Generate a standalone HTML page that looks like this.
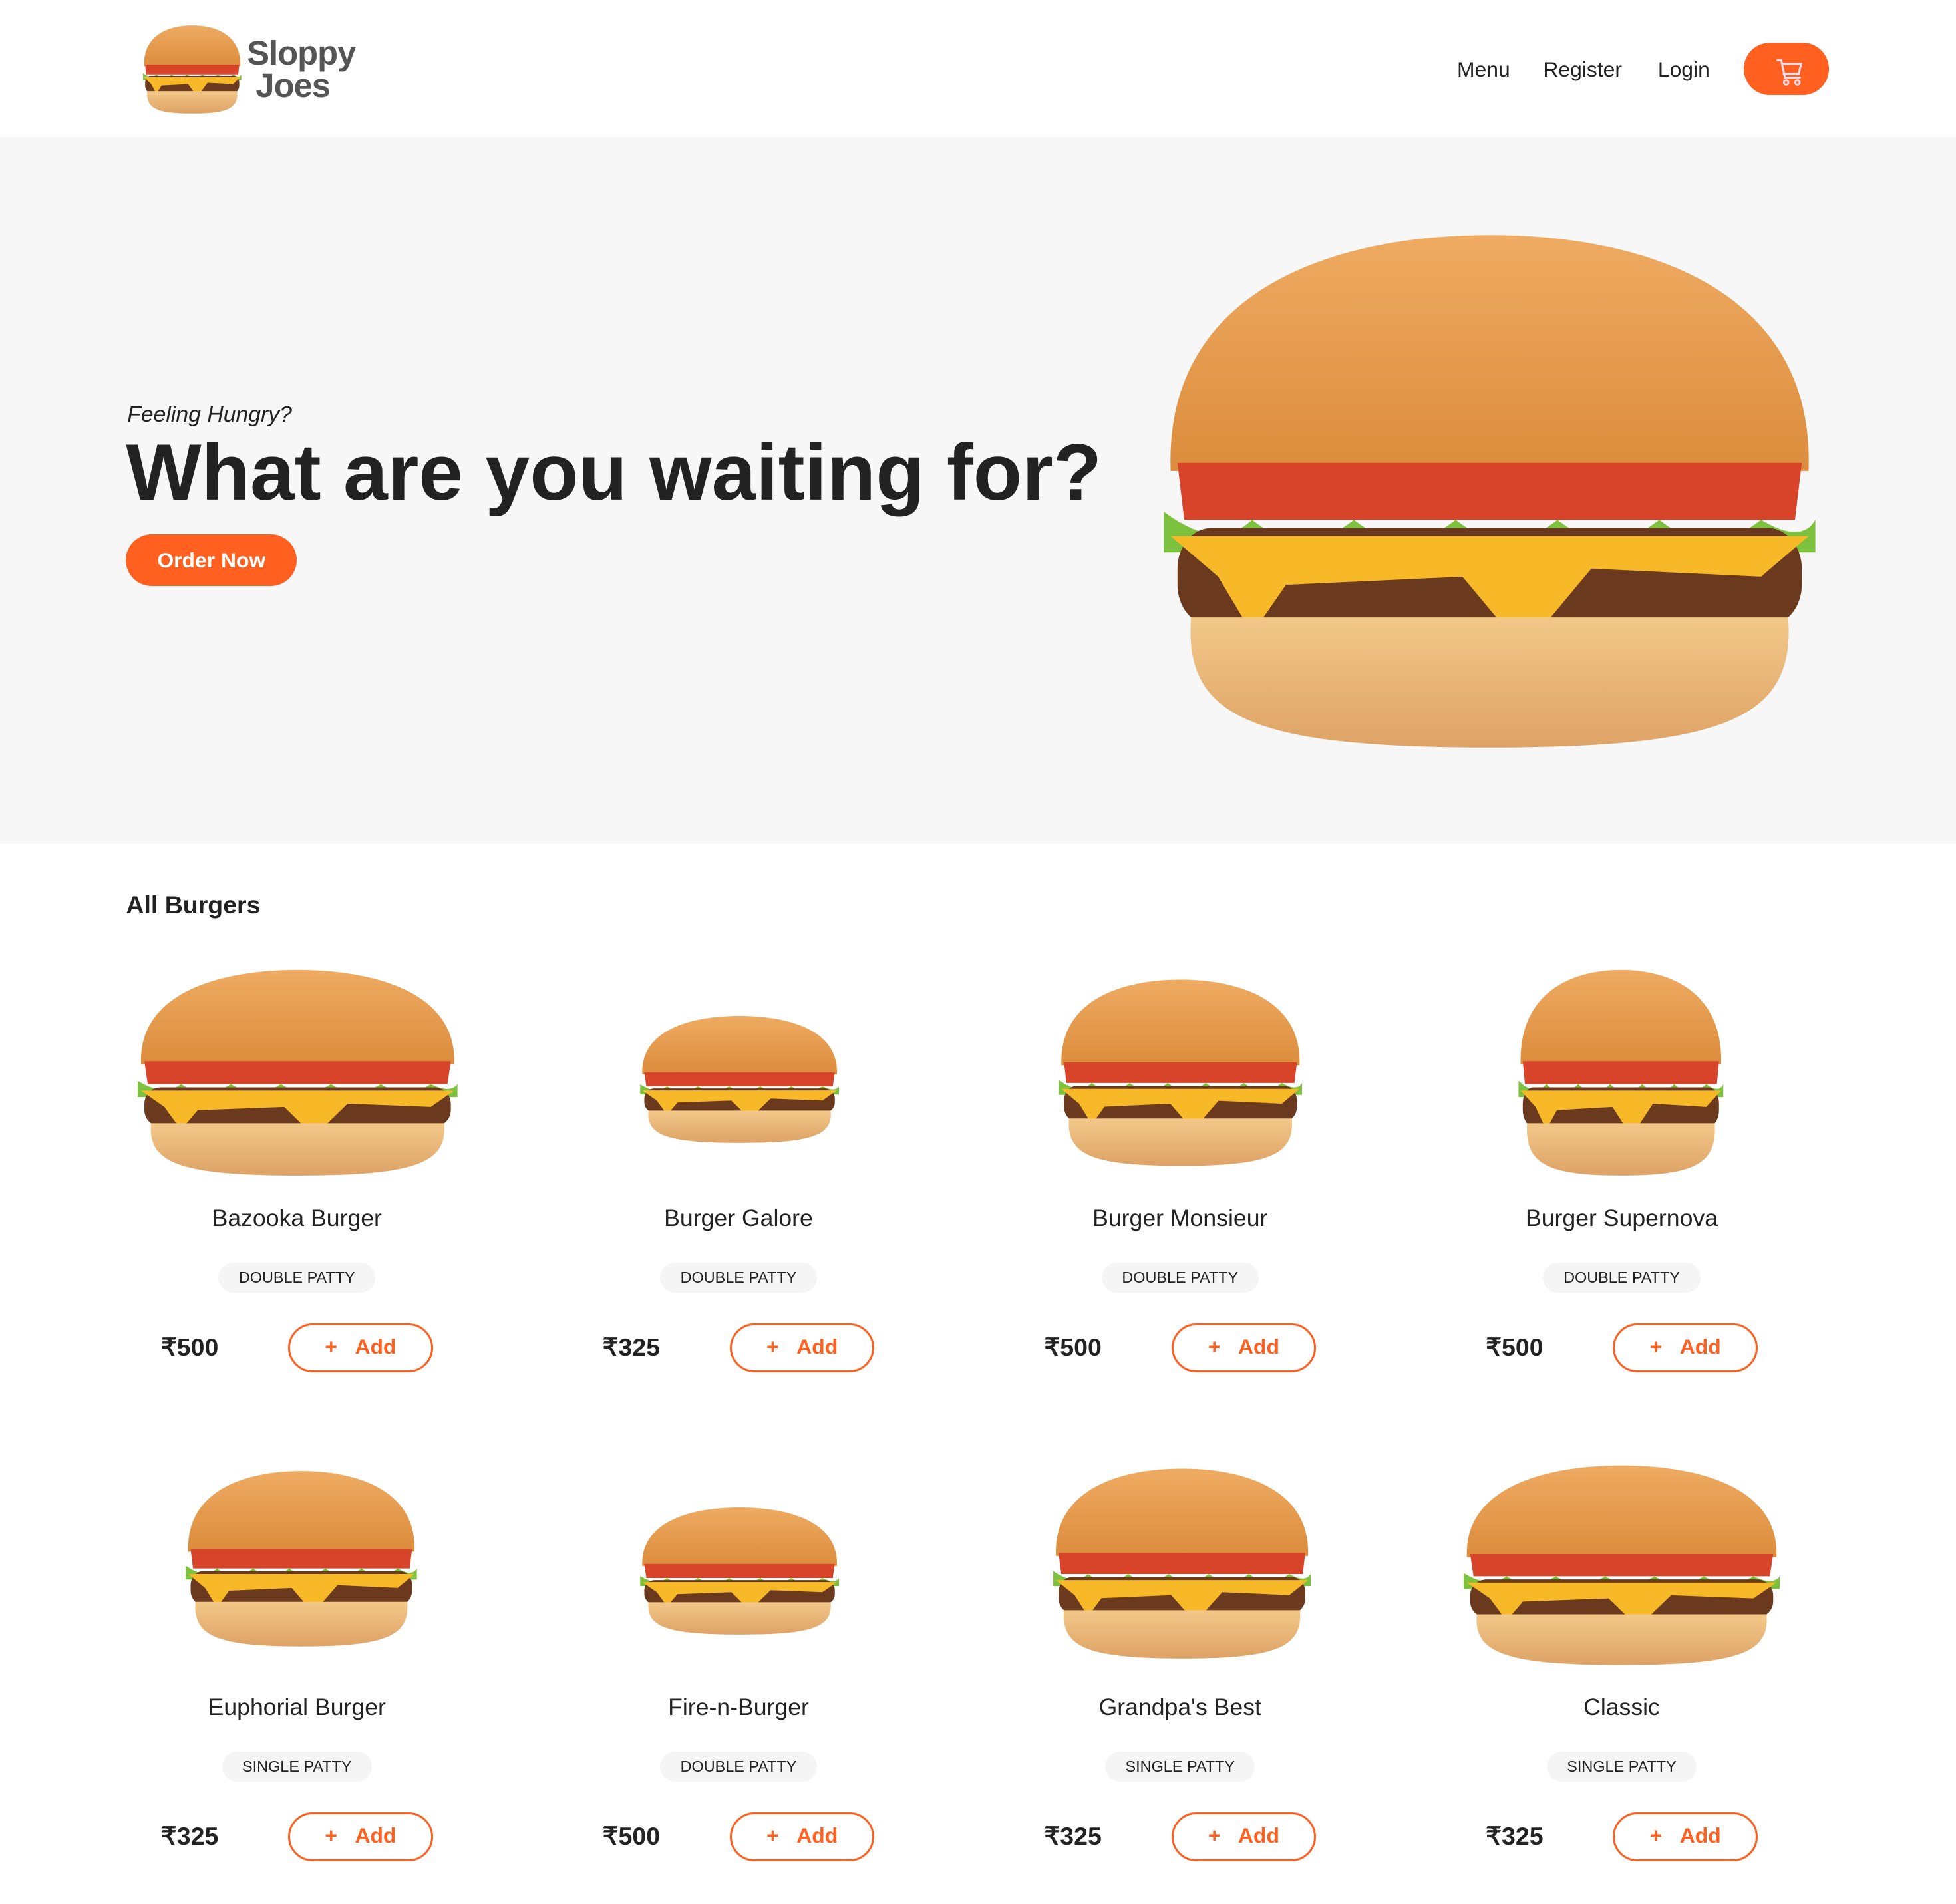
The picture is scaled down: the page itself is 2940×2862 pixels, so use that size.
<!DOCTYPE html>
<html><head><meta charset="utf-8">
<style>
html{zoom:1.875}
*{margin:0;padding:0;box-sizing:border-box}
body{width:1568px;height:1526px;overflow:hidden;background:#fff;font-family:"Liberation Sans",sans-serif;color:#222;position:relative}
.abs{position:absolute}
header{position:absolute;left:0;top:0;width:1568px;height:110px;background:#fff}
.nav{position:absolute;top:46px;font-size:17px;color:#222}
.cart{position:absolute;left:1398px;top:34px;width:68px;height:42px;border-radius:21px;background:#ff5f1f}
.hero{position:absolute;left:0;top:110px;width:1568px;height:566px;background:#f7f7f7}
h1{position:absolute;left:101px;font-size:64px;font-weight:bold;letter-spacing:0;white-space:nowrap;color:#222}
.btn{position:absolute;left:101px;width:137px;height:42px;border-radius:21px;background:#ff5f1f;color:#fff;font-weight:bold;font-size:17px;text-align:center;line-height:42px}
.name{position:absolute;width:300px;text-align:center;font-size:19px;color:#222}
.tag{position:absolute;height:24px;border-radius:12px;background:#f5f5f5;font-size:12.5px;line-height:24px;text-align:center;color:#222}
.price{position:absolute;font-size:20px;font-weight:bold;color:#222}
.add{position:absolute;width:116px;height:39px;border:2px solid #ff5f1f;border-radius:20px;color:#ff5f1f;font-weight:bold;font-size:17px;line-height:35px;text-align:center}
svg.b{position:absolute}
</style></head><body>
<svg width="0" height="0" style="position:absolute">
<defs>
<linearGradient id="bun" x1="0" y1="0" x2="0" y2="1"><stop offset="0" stop-color="#eeab62"/><stop offset="1" stop-color="#dc8c3c"/></linearGradient>
<linearGradient id="bb" x1="0" y1="0" x2="0" y2="1"><stop offset="0" stop-color="#f2c888"/><stop offset="1" stop-color="#dea266"/></linearGradient>
<symbol id="burger" viewBox="0 0 200 130" preserveAspectRatio="none">
<path d="M6 60 C4 15 55 2 100 2 C145 2 196 15 194 60 Z" fill="url(#bun)"/>
<path d="M8 58 L192 58 L190 72 L10 72 Z" fill="#d8442a"/>
<path d="M4 70 Q20 80 30 72 Q45 82 60 72 Q75 82 90 72 Q105 82 120 72 Q135 82 150 72 Q165 82 180 72 Q192 78 196 72 L196 80 L4 80 Z" fill="#7cc23e"/>
<rect x="8" y="74" width="184" height="24" rx="10" fill="#6b3a1e"/>
<path d="M6 76 L194 76 L180 86 L130 84 L110 104 L92 86 L40 88 L30 100 L20 86 Z" fill="#f7b928"/>
<path d="M12 96 L188 96 C190 120 172 128 100 128 C28 128 10 120 12 96 Z" fill="url(#bb)"/>
</symbol>
</defs></svg>

<header>
<svg class="b" style="left:113px;top:19px" width="82" height="73" viewBox="0 0 200 130" preserveAspectRatio="none"><use href="#burger"/></svg>
<div class="abs" style="left:198px;top:30px;font-size:27px;font-weight:bold;color:#555;line-height:26px;letter-spacing:-0.5px">Sloppy<br>&nbsp;Joes</div>
<div class="nav" style="left:1168px">Menu</div>
<div class="nav" style="left:1237px">Register</div>
<div class="nav" style="left:1329px">Login</div>
<div class="cart"><svg width="68" height="42" viewBox="0 0 68 42"><g fill="none" stroke="#fde" stroke-width="1.6" stroke-linecap="round"><path d="M27 14 h3 l3 14 h12"/><path d="M31 17 h15 l-2 8 h-12"/><circle cx="34" cy="32" r="1.8"/><circle cx="43" cy="32" r="1.8"/></g></svg></div>
</header>

<div class="hero">
<div class="abs" style="left:102px;top:212px;font-size:18px;font-style:italic;color:#222">Feeling Hungry?</div>
<h1 style="top:232px">What are you waiting for?</h1>
<div class="btn" style="top:318px">Order Now</div>
<svg class="b" style="left:922px;top:72px" width="544" height="424" viewBox="0 0 200 130" preserveAspectRatio="none"><use href="#burger"/></svg>
</div>

<div class="abs" style="left:101px;top:714px;font-size:20px;font-weight:bold">All Burgers</div>

<svg class="b" style="left:105px;top:775px" width="267" height="170"><use href="#burger" width="267" height="170"/></svg>
<svg class="b" style="left:510px;top:813px" width="166" height="105"><use href="#burger" width="166" height="105"/></svg>
<svg class="b" style="left:845px;top:783px" width="203" height="154"><use href="#burger" width="203" height="154"/></svg>
<svg class="b" style="left:1214px;top:775px" width="171" height="170"><use href="#burger" width="171" height="170"/></svg>
<svg class="b" style="left:145px;top:1177px" width="193" height="145"><use href="#burger" width="193" height="145"/></svg>
<svg class="b" style="left:510px;top:1207px" width="166" height="105"><use href="#burger" width="166" height="105"/></svg>
<svg class="b" style="left:840px;top:1175px" width="215" height="157"><use href="#burger" width="215" height="157"/></svg>
<svg class="b" style="left:1168px;top:1172px" width="264" height="165"><use href="#burger" width="264" height="165"/></svg>

<div class="name" style="left:88px;top:966px">Bazooka Burger</div>
<div class="name" style="left:442px;top:966px">Burger Galore</div>
<div class="name" style="left:796px;top:966px">Burger Monsieur</div>
<div class="name" style="left:1150px;top:966px">Burger Supernova</div>
<div class="tag" style="left:175px;top:1012px;width:126px">DOUBLE PATTY</div>
<div class="tag" style="left:529px;top:1012px;width:126px">DOUBLE PATTY</div>
<div class="tag" style="left:883px;top:1012px;width:126px">DOUBLE PATTY</div>
<div class="tag" style="left:1237px;top:1012px;width:126px">DOUBLE PATTY</div>
<div class="price" style="left:129px;top:1068px">₹500</div>
<div class="price" style="left:483px;top:1068px">₹325</div>
<div class="price" style="left:837px;top:1068px">₹500</div>
<div class="price" style="left:1191px;top:1068px">₹500</div>
<div class="add" style="left:231px;top:1061px">+&nbsp;&nbsp;&nbsp;Add</div>
<div class="add" style="left:585px;top:1061px">+&nbsp;&nbsp;&nbsp;Add</div>
<div class="add" style="left:939px;top:1061px">+&nbsp;&nbsp;&nbsp;Add</div>
<div class="add" style="left:1293px;top:1061px">+&nbsp;&nbsp;&nbsp;Add</div>

<div class="name" style="left:88px;top:1358px">Euphorial Burger</div>
<div class="name" style="left:442px;top:1358px">Fire-n-Burger</div>
<div class="name" style="left:796px;top:1358px">Grandpa's Best</div>
<div class="name" style="left:1150px;top:1358px">Classic</div>
<div class="tag" style="left:178px;top:1404px;width:120px">SINGLE PATTY</div>
<div class="tag" style="left:529px;top:1404px;width:126px">DOUBLE PATTY</div>
<div class="tag" style="left:886px;top:1404px;width:120px">SINGLE PATTY</div>
<div class="tag" style="left:1240px;top:1404px;width:120px">SINGLE PATTY</div>
<div class="price" style="left:129px;top:1460px">₹325</div>
<div class="price" style="left:483px;top:1460px">₹500</div>
<div class="price" style="left:837px;top:1460px">₹325</div>
<div class="price" style="left:1191px;top:1460px">₹325</div>
<div class="add" style="left:231px;top:1453px">+&nbsp;&nbsp;&nbsp;Add</div>
<div class="add" style="left:585px;top:1453px">+&nbsp;&nbsp;&nbsp;Add</div>
<div class="add" style="left:939px;top:1453px">+&nbsp;&nbsp;&nbsp;Add</div>
<div class="add" style="left:1293px;top:1453px">+&nbsp;&nbsp;&nbsp;Add</div>
</body></html>
